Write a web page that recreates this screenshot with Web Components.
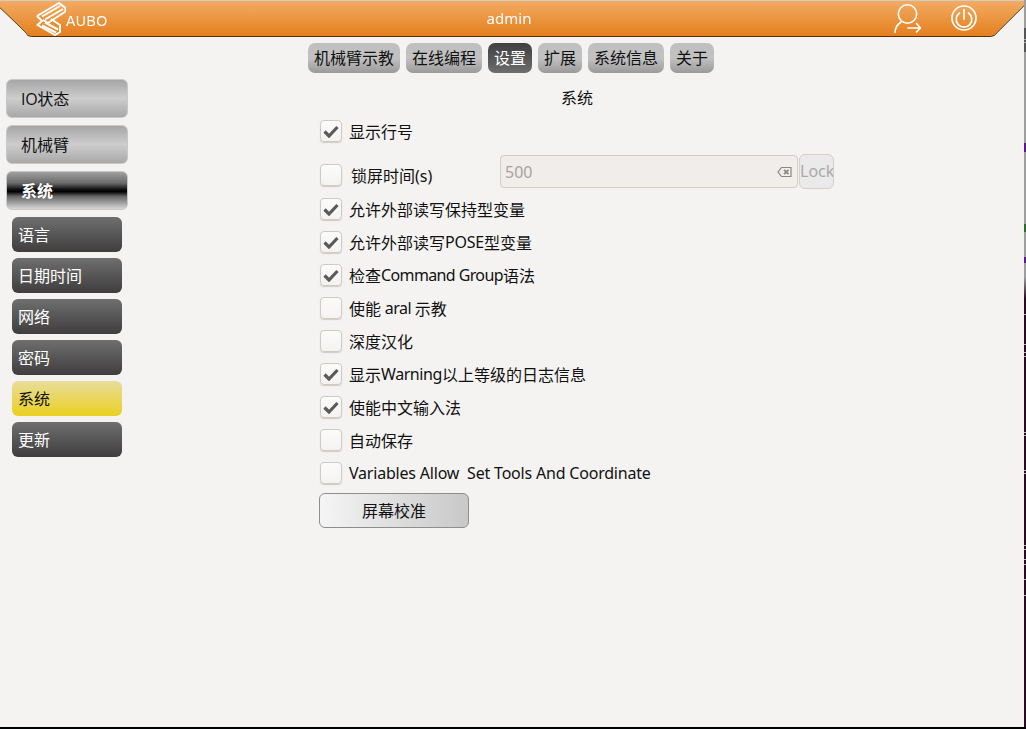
<!DOCTYPE html>
<html><head><meta charset="utf-8">
<style>
html,body{margin:0;padding:0;background:#f4f3f1;overflow:hidden}
body{width:1026px;height:729px;font-family:"Noto Sans","Noto Sans CJK SC",sans-serif;font-size:16px;color:#111}
</style></head><body>
<script>
function def(name,html){customElements.define(name,class extends HTMLElement{constructor(){super();this.attachShadow({mode:'open'}).innerHTML=html;}})}

def('app-header',`<style>
:host{display:block;height:37px;position:relative;filter:drop-shadow(0 1px 0 #5a3208)}
.bar{height:36px;box-sizing:border-box;background:#d3cdc0;padding-top:1px;clip-path:polygon(0 0,1024px 0,1024px 5px,996px 33px,994px 35px,989px 36px,33px 36px,28px 35px,25px 31px,0 7px)}
.in{height:35px;box-sizing:border-box;background:linear-gradient(#f2ab63,#e47f1e);display:flex;align-items:center;position:relative;color:#fff}
.logo{margin-left:36px;display:flex;align-items:flex-start;gap:0}
.name{font:14px "Liberation Sans",sans-serif;letter-spacing:.5px;line-height:14px;margin-top:13px;margin-left:0}
.title{position:absolute;left:0;width:1018px;text-align:center;font-size:15px;line-height:34px;top:0}
.icons{margin-left:auto;display:flex;gap:29px;margin-right:47px;align-items:center;margin-bottom:2px}
svg{display:block}
</style><div class="bar"><div class="in">
<div class="logo"><svg width="30" height="34" viewBox="0 0 30 34" fill="none" stroke="#fff" stroke-width="2" stroke-linejoin="round" style="margin-top:1px">
<path d="M1 14 L23 1 L29.5 6 L29.5 9.5 L12 21 L7 18"/><path d="M6 14.5 L24 4"/><path d="M9 17.5 L27 7"/>
<path d="M1 14 L6 19 L1.5 23 L19 33 L24 30 L24 23 L15 17"/><path d="M6 23.5 L20 30.5"/><path d="M9 20.5 L22 27.5"/></svg>
<span class="name">AUBO</span></div>
<div class="title">admin</div>
<div class="icons">
<svg width="28" height="30" viewBox="0 0 28 30" fill="none" stroke="#fff" stroke-width="1.6" stroke-linecap="round" stroke-linejoin="round"><circle cx="13.5" cy="11" r="9.2"/><path d="M1 29.5 C1 24.5 3.5 21.5 7 19"/><path d="M14 25 H26.5 M22.5 20.5 L26.5 25 L22.5 29"/></svg>
<svg width="26" height="26" viewBox="0 0 26 26" fill="none" stroke="#fff" stroke-width="1.7" stroke-linecap="round"><circle cx="13" cy="13" r="12"/><path d="M8.5 8 A7.8 7.8 0 1 0 17.5 8"/><path d="M13 4.5 V14"/></svg>
</div></div></div>`);

def('tab-btn',`<style>
:host{display:block;height:30px;border-radius:7px;box-sizing:border-box;padding:0 6px;background:linear-gradient(#bfbfbf,#c2c2c2 50%,#9a9a9a);color:#111;font-size:16px;line-height:30px;white-space:nowrap}
:host([on]){background:linear-gradient(#3f3f3f,#6e6e6e);color:#fff}
</style><slot></slot>`);

def('tab-bar',`<style>:host{display:flex;justify-content:center;gap:6px;height:30px;margin-top:6px;margin-right:2px}</style><slot></slot>`);

def('side-btn',`<style>
:host{display:block;box-sizing:border-box;width:122px;height:39px;border-radius:6px;border:1px solid #c8c8c8;padding-left:14px;line-height:39px;font-size:16px;color:#111;background:linear-gradient(#a6a6a6,#cdcdcd 50%,#a8a8a8);margin-bottom:7px}
:host([on]){background:linear-gradient(#a0a0a0,#6a6a6a 30%,#111 47%,#000 53%,#666 66%,#d8d8d8);color:#fff;font-weight:700}
</style><slot></slot>`);

def('sub-btn',`<style>
:host{display:block;box-sizing:border-box;width:110px;height:35px;margin-left:6px;border-radius:6px;padding-left:6px;line-height:37px;font-size:16px;color:#fff;background:linear-gradient(#6f6f6f,#3f3d3e);margin-bottom:6px}
:host([on]){background:linear-gradient(#e8dd9c,#ead020);color:#111}
</style><slot></slot>`);

def('side-bar',`<style>:host{display:block;width:122px;margin-left:6px;padding-top:6px;flex:none}</style><slot></slot>`);

def('check-row',`<style>
:host{display:flex;align-items:center;height:33px;color:#111;font-size:16px;white-space:pre}
.box{width:22px;height:22px;box-sizing:border-box;border:1px solid #cfcac5;border-radius:4px;background:linear-gradient(#fbfbfa,#f4f3f1);box-shadow:0 1px 1px #d0ccc8;margin-right:7px;display:flex;align-items:center;justify-content:center;flex:none}
svg{display:none}
:host([checked]) svg{display:block}
</style><div class="box"><svg width="16" height="14" viewBox="0 0 16 14"><path d="M1.5 7.5 L6 12 L14.5 3" fill="none" stroke="#5a5a5a" stroke-width="3.2"/></svg></div><slot></slot>`);

def('lock-row',`<style>
:host{display:flex;align-items:center;height:45px;font-size:16px;color:#111}
.box{width:22px;height:22px;box-sizing:border-box;border:1px solid #cfcac5;border-radius:4px;background:linear-gradient(#fbfbfa,#f4f3f1);box-shadow:0 1px 1px #d0ccc8;flex:none;margin-right:9px;margin-top:10px}
.lab{width:149px;flex:none;margin-top:10px}
.input{margin-top:4px;width:298px;height:33px;box-sizing:border-box;border:1px solid #d3cdc7;border-radius:4px;background:#f0edea;color:#a8a39e;padding:0 4px;display:flex;align-items:center;justify-content:space-between}
.lock{margin-top:4px;margin-left:1px;width:35px;height:35px;box-sizing:border-box;border:1px solid #d3cfcb;border-radius:6px;background:#eaeaea;color:#a9a9ac;line-height:33px;white-space:nowrap;overflow:hidden}
svg{display:block;margin-right:1px}
</style><div class="box"></div><div class="lab">锁屏时间(s)</div><div class="input"><span>500</span><svg width="15" height="12" viewBox="0 0 15 12"><path d="M4.5 1.5 H14 V10.5 H4.5 L1 6 Z" fill="none" stroke="#8a8680" stroke-width="1.2"/><path d="M7 3.8 L11.5 8.2 M11.5 3.8 L7 8.2" stroke="#8a8680" stroke-width="1.8"/></svg></div><div class="lock">Lock</div>`);

def('calib-btn',`<style>
:host{display:block;width:150px;height:35px;box-sizing:border-box;border:1px solid #8e8e8e;border-radius:6px;background:linear-gradient(90deg,#f5f5f5,#c8c8c8);text-align:center;line-height:35px;font-size:16px;color:#111;margin-top:4px;margin-left:-1px}
</style><slot></slot>`);

def('sys-panel',`<style>
:host{display:block;margin-left:192px;flex:1}
.t{width:514px;text-align:center;font-size:16px;line-height:20px;padding-top:15px;height:20px;margin-bottom:6px}
</style><div class="t">系统</div><slot></slot>`);

def('app-main',`<style>:host{display:flex}</style><slot></slot>`);
def('app-root',`<style>
:host{display:block;width:1024px;height:727px;box-sizing:border-box;background:#f4f3f1;position:relative}
</style><slot></slot>`);
def('edge-marks',`<style>
:host{position:absolute;left:1024px;top:0;width:2px;height:729px;background:linear-gradient(#9e9e9e 0,#9e9e9e 277px,#2a0a22 299px,#2a0a22 100%)}
.b{position:absolute;left:-1024px;top:727px;width:1026px;height:2px;background:#000}
i{position:absolute;left:0;width:2px;height:1px;background:#b9b4c0}
u{position:absolute;left:0;width:2px;background:#5a1a8a}
</style><u style="top:28px;height:24px;background:#555"></u><i style="top:39px;background:#aaa"></i><i style="top:42px;background:#aaa"></i><u style="top:143px;height:9px"></u><u style="top:224px;height:8px;background:#2e6a2e"></u><u style="top:257px;height:6px"></u>
<i style="top:314px"></i><i style="top:344px"></i><i style="top:352px"></i><i style="top:356px"></i><i style="top:432px"></i><i style="top:435px"></i><i style="top:470px"></i><i style="top:473px"></i><i style="top:545px"></i><i style="top:549px"></i><i style="top:559px"></i><i style="top:564px"></i><i style="top:579px"></i><i style="top:595px"></i>
<div class="b"></div>`);
</script>
<app-root>
<app-header></app-header>
<tab-bar><tab-btn>机械臂示教</tab-btn><tab-btn>在线编程</tab-btn><tab-btn on>设置</tab-btn><tab-btn>扩展</tab-btn><tab-btn>系统信息</tab-btn><tab-btn>关于</tab-btn></tab-bar>
<app-main>
<side-bar><side-btn><span style="font-family:'Open Sans',sans-serif;letter-spacing:-.3px">IO</span>状态</side-btn><side-btn>机械臂</side-btn><side-btn on>系统</side-btn><sub-btn>语言</sub-btn><sub-btn>日期时间</sub-btn><sub-btn>网络</sub-btn><sub-btn>密码</sub-btn><sub-btn on>系统</sub-btn><sub-btn>更新</sub-btn></side-bar>
<sys-panel>
<check-row checked>显示行号</check-row>
<lock-row></lock-row>
<check-row checked>允许外部读写保持型变量</check-row>
<check-row checked>允许外部读写<span style="letter-spacing:-.25px">POSE</span>型变量</check-row>
<check-row checked>检查<span style="letter-spacing:-.62px">Command Group</span>语法</check-row>
<check-row>使能<span style="letter-spacing:-.5px"> aral </span>示教</check-row>
<check-row>深度汉化</check-row>
<check-row checked>显示<span style="letter-spacing:-.43px">Warning</span>以上等级的日志信息</check-row>
<check-row checked>使能中文输入法</check-row>
<check-row>自动保存</check-row>
<check-row><span style="letter-spacing:-.2px">Variables Allow  Set Tools And Coordinate</span></check-row>
<calib-btn>屏幕校准</calib-btn>
</sys-panel>
</app-main>
<edge-marks></edge-marks>
</app-root>
</body></html>
